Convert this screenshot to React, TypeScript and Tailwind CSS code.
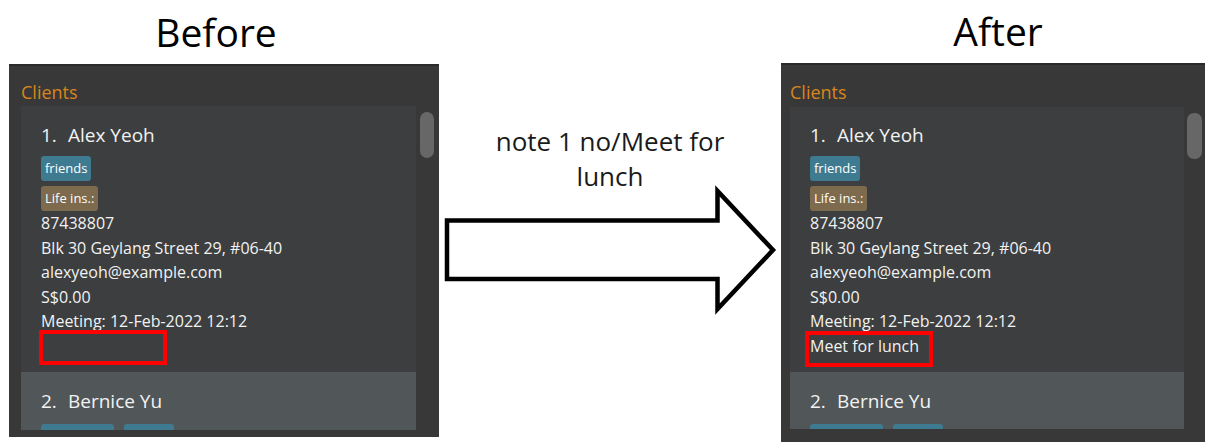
const font = "font-['Open_Sans',sans-serif]";

type PanelProps = {
  side: "before" | "after";
};

function Tag({ label, color }: { label: string; color: string }) {
  return (
    <span
      className={`inline-flex h-[25px] items-center rounded-[3px] px-[4px] text-[13px] leading-none text-white ${color}`}
    >
      {label}
    </span>
  );
}

function ClientPanel({ side }: PanelProps) {
  const after = side === "after";
  return (
    <div
      className={`flex flex-col bg-[#383838] border-t-2 border-[#2b2b2b] ${
        after ? "w-[424px] h-[379px] pl-[9px]" : "w-[430px] h-[373px] pl-[12px]"
      }`}
    >
      {/* header */}
      <div className={after ? "h-[42px]" : "h-[40px]"}>
        <div className={`${after ? "mt-[15px]" : "mt-[14px]"} text-[18px] leading-[24px] text-[#d9861a]`}>
          Clients
        </div>
      </div>

      <div className="flex">
        {/* list */}
        <div
          className={`flex flex-col overflow-hidden ${
            after ? "w-[394px] h-[322px]" : "w-[395px] h-[324px]"
          }`}
        >
          {/* card 1 */}
          <div className={`bg-[#3c3e3f] pl-[20px] pb-[14px] ${after ? "pt-[14px]" : "pt-[15px]"}`}>
            <div className="flex text-[19px] leading-[28px] text-[#f2f2f2]">
              <span className="w-[27px]">1.</span>
              <span>Alex Yeoh</span>
            </div>
            <div className="mt-[7px] flex flex-col items-start gap-[5px]">
              <Tag label="friends" color="bg-[#3e7b91]" />
              <Tag label="Life ins.:" color="bg-[#7e6a4c]" />
            </div>
            <div className="text-[16px] leading-[24.5px] text-[#f2f2f2]">
              <div>87438807</div>
              <div>Blk 30 Geylang Street 29, #06-40</div>
              <div>alexyeoh@example.com</div>
              <div>S$0.00</div>
              <div>Meeting: 12-Feb-2022 12:12</div>
              <div className="relative h-[24.5px]">
                {after ? "Meet for lunch" : ""}
                <div
                  className={`absolute w-[128px] border-4 border-[#ff0000] ${
                    after ? "left-[-5px] top-[-3px] h-[36px]" : "left-[-2px] top-[-4px] h-[35px]"
                  }`}
                />
              </div>
            </div>
          </div>

          {/* card 2, cut off by the list edge */}
          <div className="bg-[#515658] pl-[20px] pt-[15px] pb-[14px]">
            <div className="flex text-[19px] leading-[28px] text-[#f2f2f2]">
              <span className="w-[27px]">2.</span>
              <span>Bernice Yu</span>
            </div>
            <div className="mt-[9px] flex gap-[10px]">
              <span className="h-[25px] w-[73px] rounded-[3px] bg-[#3e7b91]" />
              <span className="h-[25px] w-[50px] rounded-[3px] bg-[#3e7b91]" />
            </div>
          </div>
        </div>

        {/* scrollbar */}
        <div
          className={`mt-[6px] h-[46px] rounded-[7px] bg-[#676767] ${
            after ? "ml-[3px] w-[15px]" : "ml-[4px] w-[14px]"
          }`}
        />
      </div>
    </div>
  );
}

export default function App() {
  return (
    <div className={`flex h-[442px] w-[1207px] overflow-hidden bg-white ${font}`}>
      {/* Before */}
      <div className="flex flex-col pl-[9px]">
        <div className="flex h-[64px] items-center justify-center pr-[16px] text-[39px] text-black">
          Before
        </div>
        <ClientPanel side="before" />
      </div>

      {/* command + arrow */}
      <div className="flex w-[342px] flex-col items-center pt-[124px]">
        <div className="text-center text-[26px] leading-[35px] text-[#1a1a1a]">
          note 1 no/Meet for
          <br />
          lunch
        </div>
        <svg width="342" height="132" viewBox="0 0 342 132" className="-mt-[10px]">
          <polygon
            points="8,36.5 278.5,36.5 278.5,7 334,66 278.5,125 278.5,95 8,95"
            fill="white"
            stroke="black"
            strokeWidth="4.5"
            strokeLinejoin="miter"
          />
        </svg>
      </div>

      {/* After */}
      <div className="flex flex-col">
        <div className="flex h-[63px] items-center justify-center pl-[10px] text-[39px] text-black">
          After
        </div>
        <ClientPanel side="after" />
      </div>
    </div>
  );
}
